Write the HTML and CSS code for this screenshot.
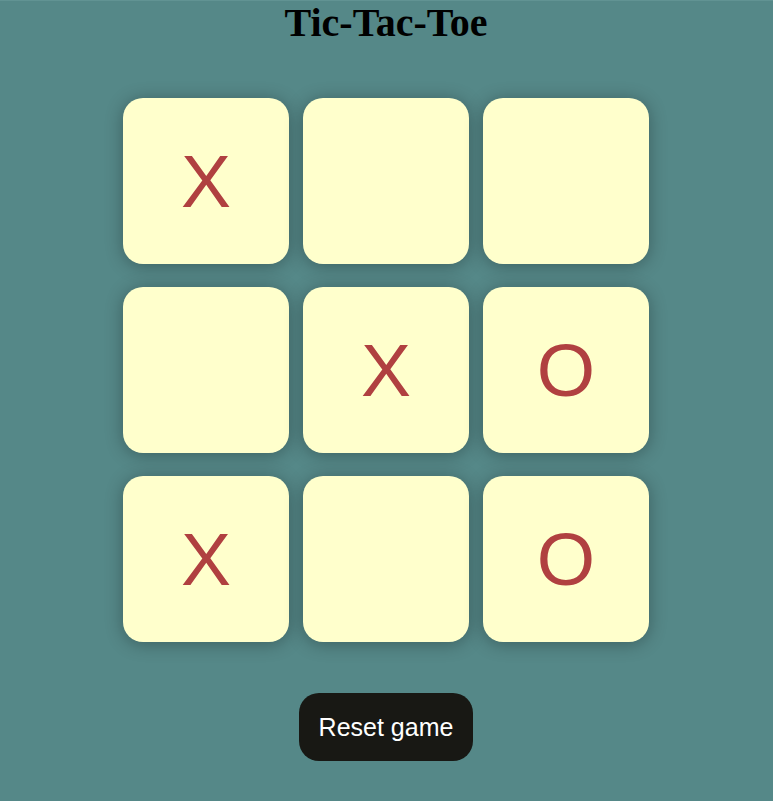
FILE: index.html
```html
<!DOCTYPE html>
<html>
<head>
<meta charset="utf-8">
<link rel="stylesheet" href="styles.css">
</head>
<body>
<h1 class="title">Tic-Tac-Toe</h1>
<div class="board">
  <div class="cell">X</div>
  <div class="cell"></div>
  <div class="cell"></div>
  <div class="cell"></div>
  <div class="cell">X</div>
  <div class="cell">O</div>
  <div class="cell">X</div>
  <div class="cell"></div>
  <div class="cell">O</div>
</div>
<div class="actions">
  <button class="reset">Reset game</button>
</div>
</body>
</html>
```
FILE: styles.css
```css
html, body {
  margin: 0;
  padding: 0;
  background: #558888;
}
body {
  min-height: 800px;
  border-top: 1px solid #619393;
  padding-right: 1px;
  display: flex;
  flex-direction: column;
  align-items: center;
}
.title {
  margin: -1px 0 0 0;
  font-family: "Liberation Serif", "Times New Roman", serif;
  font-size: 40px;
  font-weight: bold;
  line-height: 46px;
  color: #000;
  text-align: center;
}
.board {
  margin-top: 52px;
  display: grid;
  grid-template-columns: repeat(3, 166px);
  grid-auto-rows: 166px;
  column-gap: 14px;
  row-gap: 23px;
}
.cell {
  background: #ffffcc;
  border-radius: 20px;
  box-shadow: 0 2px 18px rgba(0, 0, 0, 0.3);
  display: flex;
  align-items: center;
  justify-content: center;
  font-family: "Liberation Sans", Arial, sans-serif;
  font-size: 75px;
  color: #b04040;
  line-height: 1;
}
.actions {
  margin-top: 51px;
  display: flex;
  justify-content: center;
}
.reset {
  background: #181814;
  color: #ffffff;
  border: none;
  border-radius: 20px;
  padding: 0 20px;
  font-family: "Liberation Sans", Arial, sans-serif;
  font-size: 25px;
  line-height: 28px;
  height: 68px;
  white-space: nowrap;
  cursor: pointer;
}
```
